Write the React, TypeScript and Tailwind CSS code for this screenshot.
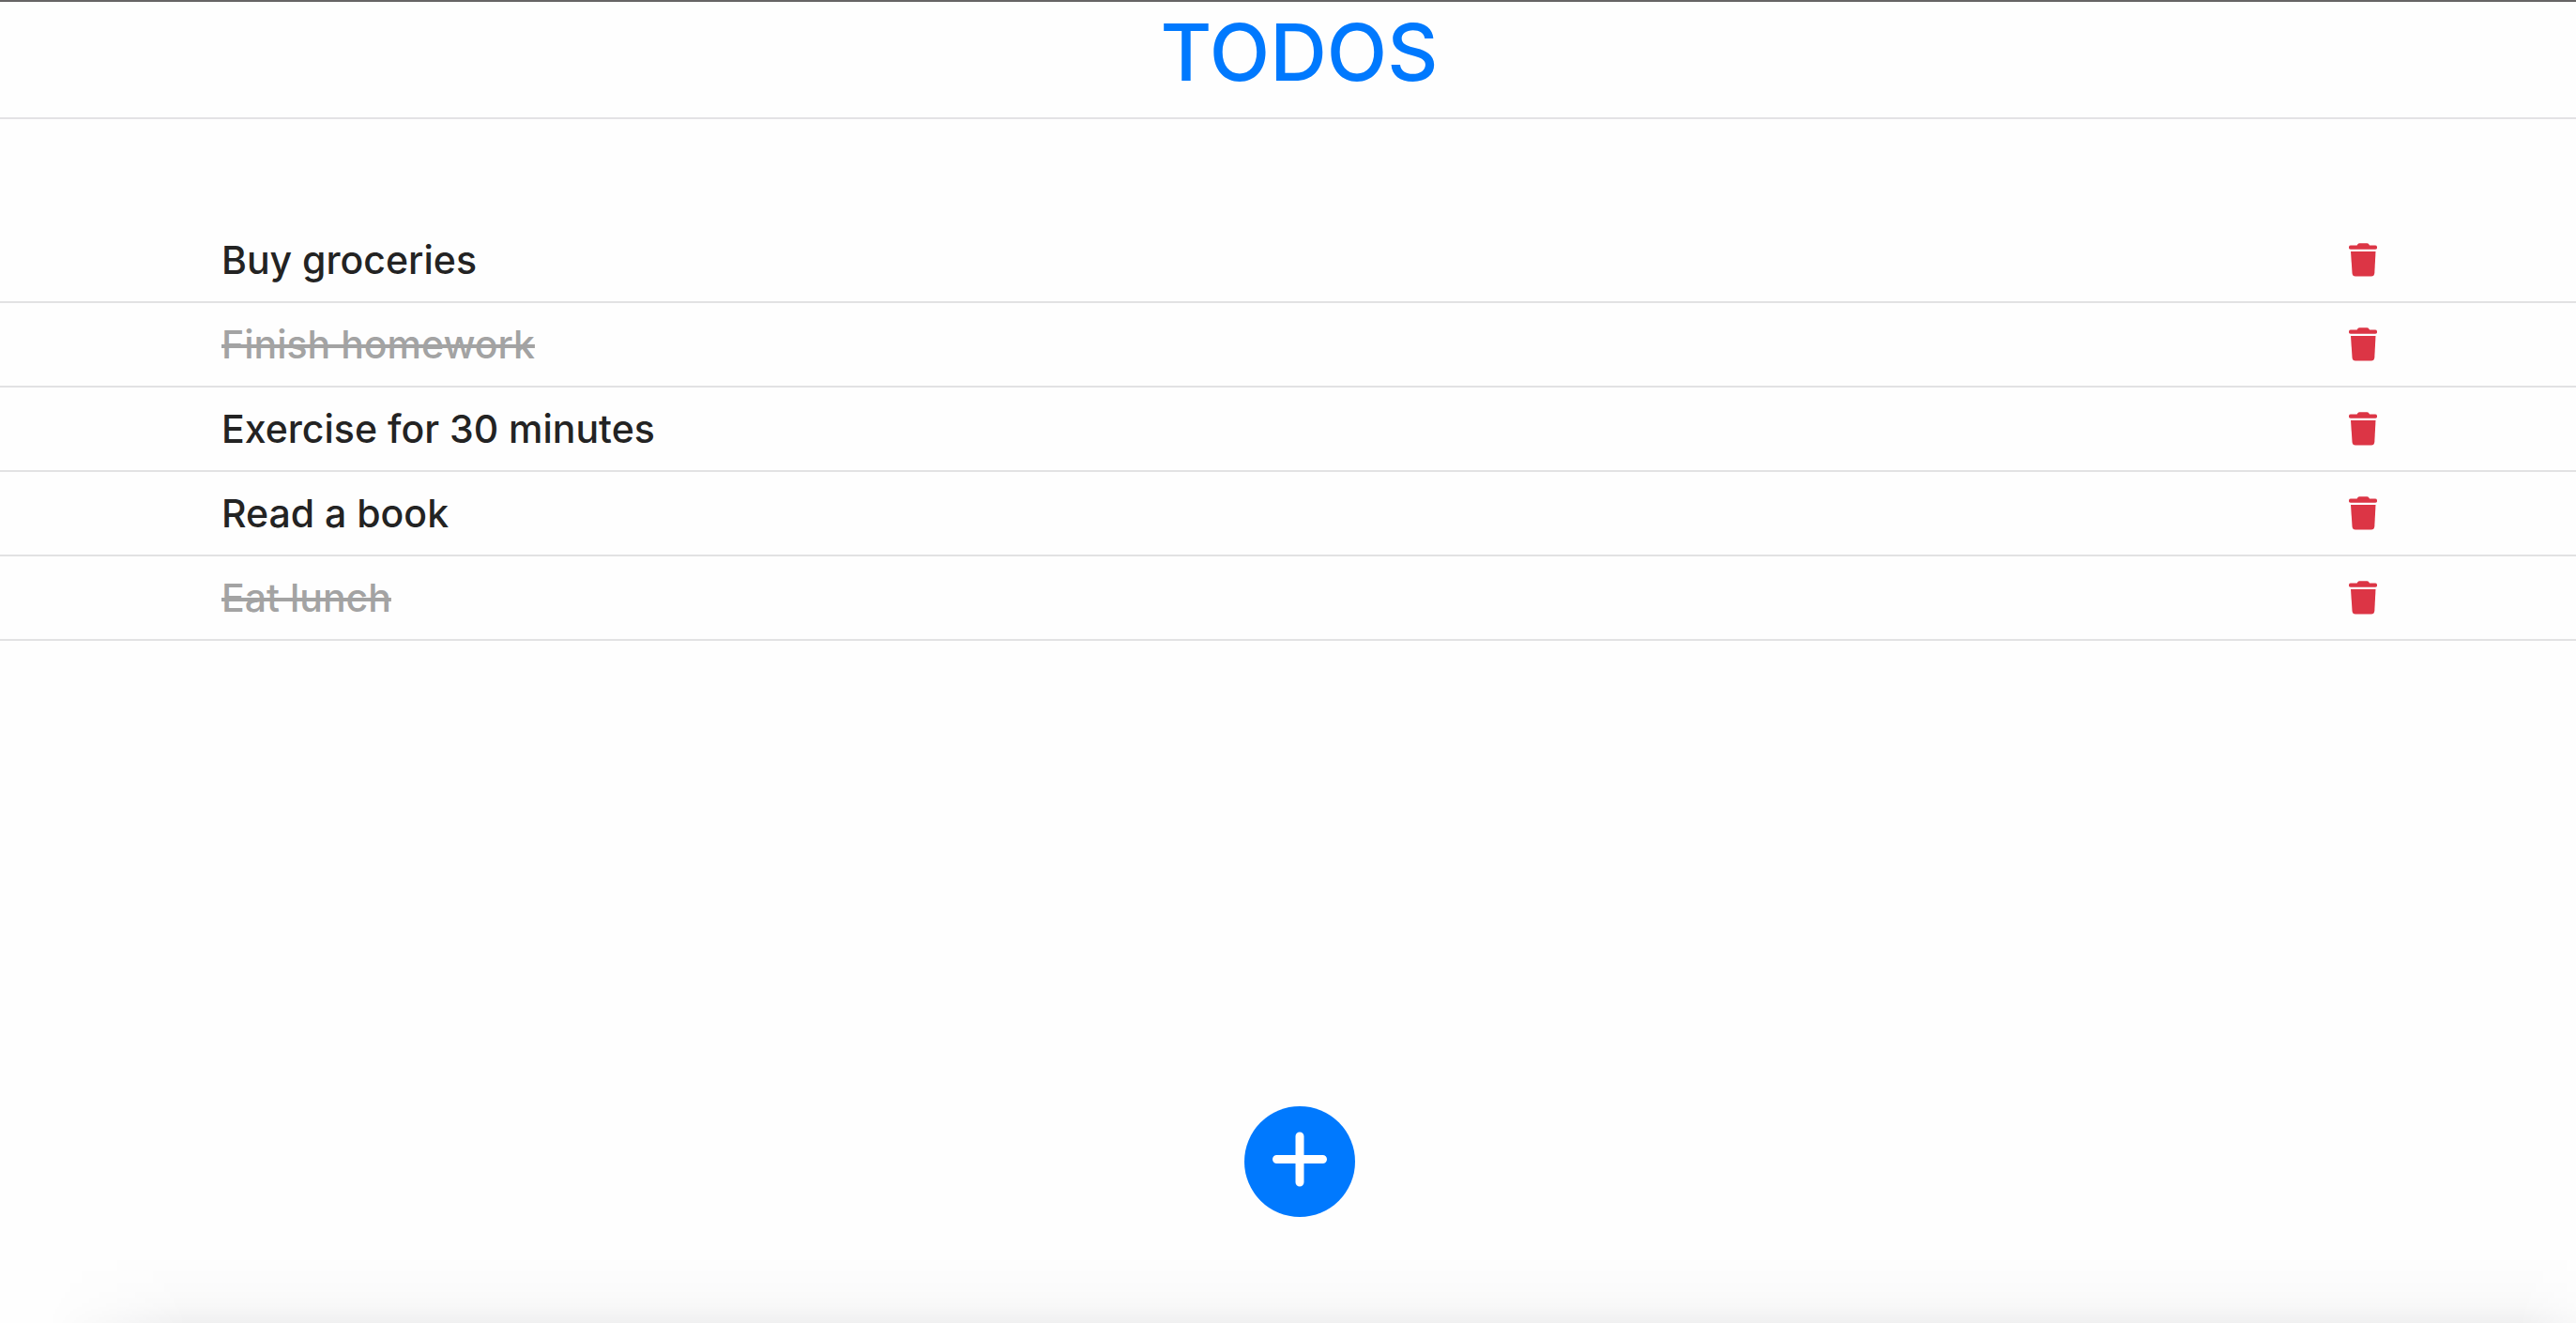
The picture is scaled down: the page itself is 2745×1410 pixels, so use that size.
import { useState } from "react";

type Todo = { id: number; text: string; done: boolean };

const initialTodos: Todo[] = [
  { id: 1, text: "Buy groceries", done: false },
  { id: 2, text: "Finish homework", done: true },
  { id: 3, text: "Exercise for 30 minutes", done: false },
  { id: 4, text: "Read a book", done: false },
  { id: 5, text: "Eat lunch", done: true },
];

function TrashIcon() {
  return (
    <svg viewBox="0 0 30 36" className="h-9 w-[30px]" fill="currentColor" aria-hidden="true">
      <path d="M2 2.6H8.6L9.4 1.2Q10 0.2 11.4 0.2H19.2Q20.6 0.2 21.2 1.2L22 2.6H28A2.1 2.1 0 0 1 28 6.8H2A2.1 2.1 0 0 1 2 2.6Z" />
      <path d="M2 9H28.5L27.3 32Q27 35.5 23.8 35.5H7Q3.8 35.5 3.5 32Z" />
    </svg>
  );
}

function PlusIcon() {
  return (
    <svg viewBox="0 0 118 118" className="size-full" aria-hidden="true">
      <path d="M59 32V81M34.5 56.5H83.5" stroke="currentColor" strokeWidth="9" strokeLinecap="round" />
    </svg>
  );
}

export default function App() {
  const [todos, setTodos] = useState(initialTodos);

  const toggle = (id: number) =>
    setTodos((list) => list.map((t) => (t.id === id ? { ...t, done: !t.done } : t)));
  const remove = (id: number) => setTodos((list) => list.filter((t) => t.id !== id));
  const add = () => setTodos((list) => [...list, { id: Date.now(), text: "New todo", done: false }]);

  return (
    <div className="flex min-h-screen flex-col border-t-2 border-[#666465] bg-[#fefefe] font-['Inter',sans-serif]">
      <header className="border-b-2 border-[#e3e2e5] pt-1.5 pb-[21px] pl-6 text-center">
        <h1 className="text-[84px] leading-24 font-medium text-[#0079fe]">TODOS</h1>
      </header>

      <main className="flex grow flex-col pt-[106px]">
        <ul>
          {todos.map((todo) => (
            <li
              key={todo.id}
              className="flex h-[90px] items-center justify-between border-b-2 border-[#e2e2e3] pr-[212px] pl-[236px]"
            >
              <button
                type="button"
                onClick={() => toggle(todo.id)}
                className={
                  todo.done
                    ? "text-[41px] leading-14 font-medium text-[#a3a3a3] line-through decoration-4"
                    : "text-[41px] leading-14 font-medium text-[#232323]"
                }
              >
                {todo.text}
              </button>
              <button
                type="button"
                onClick={() => remove(todo.id)}
                aria-label={`Delete ${todo.text}`}
                className="text-[#dc3545]"
              >
                <TrashIcon />
              </button>
            </li>
          ))}
        </ul>

        <div className="mt-auto flex justify-center pb-10 pl-6">
          <button
            type="button"
            onClick={add}
            aria-label="Add todo"
            className="size-[118px] rounded-full bg-[#0079fe] text-white"
          >
            <PlusIcon />
          </button>
        </div>
      </main>

      <footer className="h-[73px] bg-[linear-gradient(to_bottom,transparent,rgb(0_0_10/0.01)_50%,rgb(0_0_10/0.025)_75%,rgb(0_0_10/0.055))] [mask-image:linear-gradient(to_right,transparent_50px,black_200px,black_calc(100%-60px),rgb(0_0_0/0.4))]" />
    </div>
  );
}
